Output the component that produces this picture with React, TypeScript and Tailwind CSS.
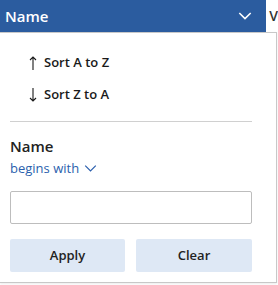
import React from 'react';

export default function App() {
    return (
        <div className="w-[278px] h-[285px] bg-white overflow-hidden relative" style={{ fontFamily: '"Open Sans", "Noto Sans", sans-serif' }}>
            {/* column header */}
            <div className="flex h-[32px]">
                <div className="w-[269px] bg-[#2b5c9f] flex items-center justify-between pl-[5px] pr-[14px]">
                    <span className="text-white text-[15px] font-semibold">Name</span>
                    <svg className="w-[14px] h-[14px]" viewBox="0 0 16 16" fill="none" stroke="white" strokeWidth="1.8">
                        <path d="M1.5 4.5l6.5 6.5 6.5-6.5" />
                    </svg>
                </div>
                <div className="flex-1 pl-[3px] pt-[5px] text-[14px] text-[#333] font-semibold">V</div>
            </div>

            {/* dropdown panel */}
            <div className="w-[277px] h-[251px] border-t border-r border-b border-[#c8c8c8] shadow-[0_1px_2px_rgba(0,0,0,0.08)]">
                <div className="pl-[29px] pt-[20px] flex flex-col gap-[13px] text-[13px] font-semibold text-[#1a1a1a]">
                    <div className="flex items-center gap-[7px] h-[19px]">
                        <svg width="8" height="14" viewBox="0 0 8 14" fill="none" stroke="#1a1a1a" strokeWidth="1.1">
                            <path d="M4 1v13M1 4l3-3 3 3" />
                        </svg>
                        <span>Sort A to Z</span>
                    </div>
                    <div className="flex items-center gap-[7px] h-[19px]">
                        <svg width="8" height="14" viewBox="0 0 8 14" fill="none" stroke="#1a1a1a" strokeWidth="1.1">
                            <path d="M4 0v13M1 10l3 3 3-3" />
                        </svg>
                        <span>Sort Z to A</span>
                    </div>
                </div>

                <div className="mx-[10px] w-[242px] mt-[17px] border-t border-[#d0d0d0]" />

                <div className="px-[10px] pt-[14px]">
                    <div className="text-[15px] font-semibold text-[#222] leading-[20px]">Name</div>
                    <div className="flex items-center gap-[5px] text-[13px] text-[#2b5fad] leading-[20px] mt-[2px]">
                        <span>begins with</span>
                        <svg className="w-[13px] h-[13px]" viewBox="0 0 16 16" fill="none" stroke="#2b5fad" strokeWidth="1.5">
                            <path d="M1.5 4.5l6.5 6.5 6.5-6.5" />
                        </svg>
                    </div>
                    <input className="block mt-[13px] w-[242px] h-[33px] border border-[#bdbdbd] rounded-[2px] outline-none" />
                    <div className="flex gap-[11px] mt-[15px] w-[242px]">
                        <button className="w-[115px] h-[33px] bg-[#dee8f5] rounded-[2px] text-[13px] font-semibold text-[#222]">Apply</button>
                        <button className="flex-1 h-[33px] bg-[#dee8f5] rounded-[2px] text-[13px] font-semibold text-[#222]">Clear</button>
                    </div>
                </div>
            </div>
        </div>
    );
}
